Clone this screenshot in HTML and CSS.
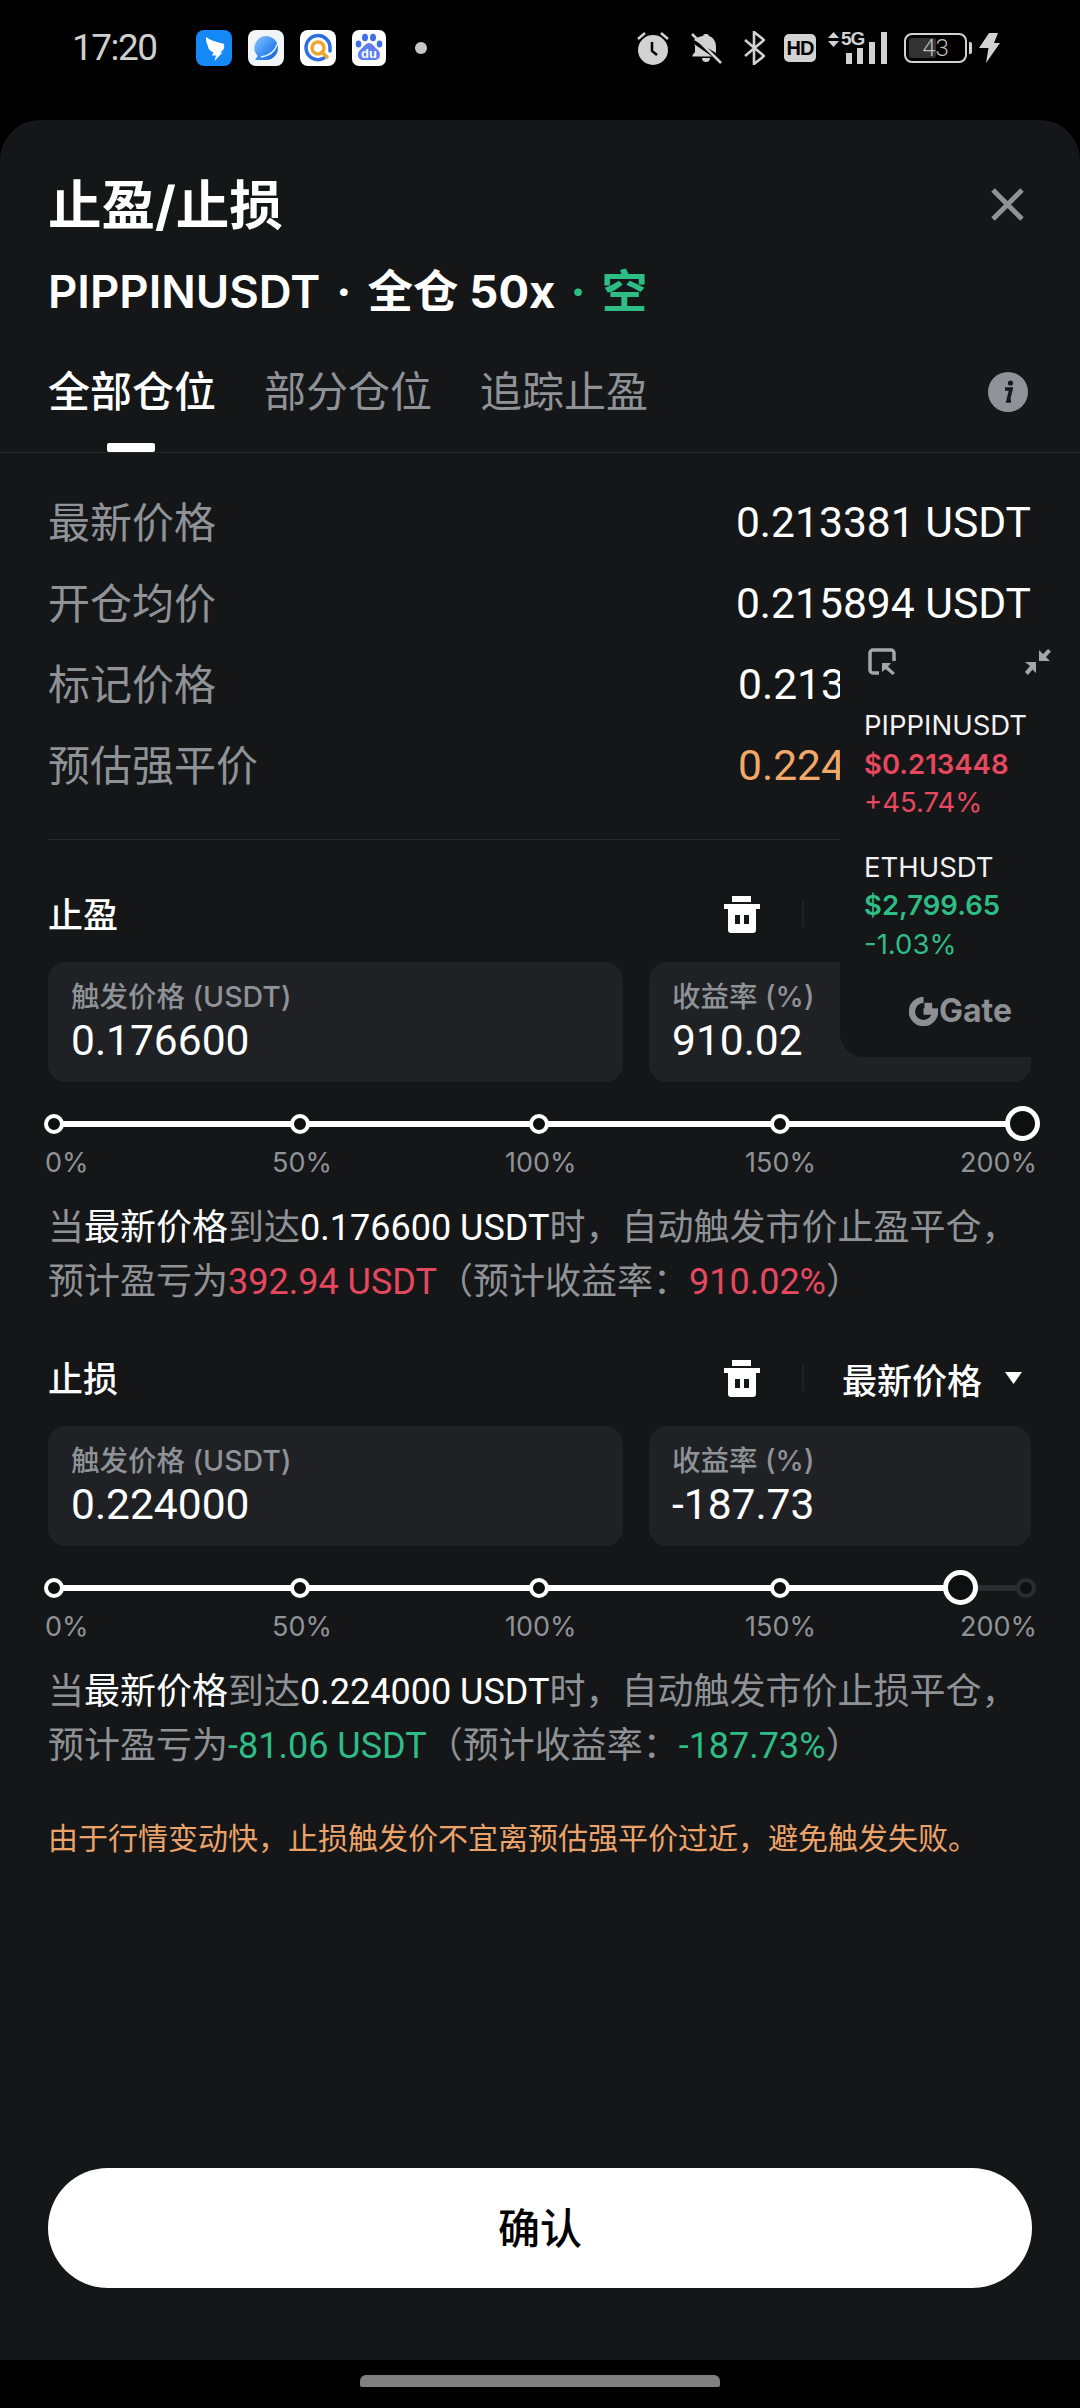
FILE: index.html
```html
<!DOCTYPE html>
<html lang="zh-CN">
<head>
<meta charset="utf-8">
<title>止盈/止损</title>
<link rel="stylesheet" href="styles.css">
</head>
<body>
<div class="screen">
  <header class="status">
    <span class="time">17:20</span>
    <div class="apps">
      <svg class="app" viewBox="0 0 36 36"><rect width="36" height="36" rx="8" fill="#1488f5"/><path d="M10 7C15 11 22 12 28 14C29 18 27 21 24 22.500L26.500 22.500L18.500 31L20 25.500L16 25.500L17.500 22.500C14 21 12 19 12 16C10 13 10 10 10 7Z" fill="#fff"/></svg>
      <svg class="app" viewBox="0 0 36 36"><defs><linearGradient id="orb" x1="0" y1="0" x2="1" y2="1"><stop offset="0" stop-color="#8cc8fb"/><stop offset=".55" stop-color="#3a8df2"/><stop offset="1" stop-color="#1557d6"/></linearGradient></defs><rect width="36" height="36" rx="8" fill="#f2f5f8"/><path d="M18 6a12 12 0 1 1 0 24H7l2.500-4A12 12 0 0 1 18 6Z" fill="url(#orb)"/><path d="M13 27C21 26 27 21 29.500 14" fill="none" stroke="#e8f2fd" stroke-width="1.500"/></svg>
      <svg class="app" viewBox="0 0 36 36"><rect width="36" height="36" rx="8" fill="#fff"/><path d="M24 28A12 12 0 1 1 30 18V21" fill="none" stroke="#2f6fe0" stroke-width="3.500" stroke-linecap="round"/><circle cx="18" cy="18" r="6" fill="none" stroke="#eda72f" stroke-width="3.500"/><path d="M22 22L27 27" stroke="#eda72f" stroke-width="3.500" stroke-linecap="round"/></svg>
      <svg class="app narrow" viewBox="0 0 34 36"><rect width="34" height="36" rx="7" fill="#fff"/><ellipse cx="6.500" cy="14" rx="2.800" ry="3.600" fill="#3f6fe8"/><ellipse cx="13" cy="7.500" rx="3" ry="3.800" fill="#3f6fe8"/><ellipse cx="21" cy="7.500" rx="3" ry="3.800" fill="#3f6fe8"/><ellipse cx="27.500" cy="14" rx="2.800" ry="3.600" fill="#3f6fe8"/><path d="M17 13C21 13 22 17 26 20C29 23 29 30 23 30H11C5 30 5 23 8 20C12 17 13 13 17 13Z" fill="#5d7ff0"/><text x="17" y="28" class="du">du</text></svg>
      <span class="dot"></span>
    </div>
    <div class="sys">
      <svg class="alarm" viewBox="0 0 32 34"><circle cx="16" cy="19" r="15" fill="#d2d2d2"/><path d="M15 11V20L20 24" fill="none" stroke="#000" stroke-width="2.500"/><path d="M1 8L8 2M31 8L24 2" stroke="#d2d2d2" stroke-width="2.500"/></svg>
      <svg class="bell" viewBox="0 0 31 32"><path d="M15 2a2.500 2.500 0 0 1 3 2C23 6 25 10 25 15V21L3 8C5 6 8 4.500 12 4A2.500 2.500 0 0 1 15 2ZM3 12L21 24.500H1.500V23L4 20V14ZM11 26H19A4 4 0 0 1 11 26Z" fill="#d2d2d2"/><path d="M1 2L30 31" stroke="#d2d2d2" stroke-width="2.500"/></svg>
      <svg class="bt" viewBox="0 0 21 34"><path d="M1 9L20 25L10 33V1L20 9L1 25" fill="none" stroke="#d2d2d2" stroke-width="2.600"/></svg>
      <span class="hd">HD</span>
      <div class="net">
        <svg class="net-arrows" viewBox="0 0 11 15"><path d="M5.500 0L11 6H0ZM0 9H11L5.500 15Z" fill="#d2d2d2"/></svg>
        <span class="fiveg">5G</span>
        <span class="bar b1"></span><span class="bar b2"></span><span class="bar b3"></span><span class="bar b4"></span>
      </div>
      <div class="battery"><span class="bat-body"><span class="bat-fill"></span><span class="bat-num">43</span></span><span class="bat-nub"></span></div>
      <svg class="bolt" viewBox="0 0 21 30"><path d="M10 0H19L15 10H21L7 30L9.500 15H0Z" fill="#d2d2d2"/></svg>
    </div>
  </header>

  <main class="sheet">
    <div class="title-row">
      <h1 class="title">止盈/止损</h1>
      <svg class="close" viewBox="0 0 33 33"><path d="M2 2L31 31M31 2L2 31" stroke="#8f9296" stroke-width="5"/></svg>
    </div>
    <div class="subtitle">PIPPINUSDT<span class="sep">·</span><span class="cross">全仓 50x</span><span class="sep green">·</span><span class="green side">空</span></div>
    <nav class="tabs">
      <span class="tab active">全部仓位</span>
      <span class="tab">部分仓位</span>
      <span class="tab">追踪止盈</span>
      <svg class="info" viewBox="0 0 40 40"><circle cx="20" cy="20" r="20" fill="#8f9296"/><circle cx="22.500" cy="11" r="2.600" fill="#17181b"/><path d="M17 17H23L20 29H23" fill="none" stroke="#17181b" stroke-width="3.600"/></svg>
    </nav>

    <section class="info-list">
      <div class="info-row"><span class="key">最新价格</span><span class="val">0.213381 USDT</span></div>
      <div class="info-row"><span class="key">开仓均价</span><span class="val">0.215894 USDT</span></div>
      <div class="info-row"><span class="key">标记价格</span><span class="val partial">0.213</span></div>
      <div class="info-row"><span class="key">预估强平价</span><span class="val partial orange">0.224</span></div>
    </section>

    <section class="block first">
      <div class="block-head covered">
        <span class="block-title">止盈</span>
        <svg class="trash" viewBox="0 0 36 37"><path d="M8 0H27V6H8ZM0 8H36V13H32V34a3 3 0 0 1-3 3H7a3 3 0 0 1-3-3V13H0ZM11 19V28H16V19ZM20 19V28H25V19Z" fill="#fff" fill-rule="evenodd"/></svg>
        <span class="vsep"></span>
      </div>
      <div class="inputs">
        <div class="field"><span class="field-label">触发价格 (USDT)</span><span class="field-value">0.176600</span></div>
        <div class="field"><span class="field-label">收益率 (%)</span><span class="field-value">910.02</span></div>
      </div>
      <div class="slider">
        <span class="track dim"></span>
        <span class="track fill full"></span>
        <span class="node n0"></span><span class="node n1"></span><span class="node n2"></span><span class="node n3"></span>
        <span class="thumb t-full"></span>
      </div>
      <div class="scale"><span>0%</span><span>50%</span><span>100%</span><span>150%</span><span>200%</span></div>
      <p class="desc">当<b>最新价格</b>到达<b>0.176600 USDT</b>时，自动触发市价止盈平仓，<br>预计盈亏为<i class="red">392.94 USDT</i>（预计收益率：<i class="red">910.02%</i>）</p>
    </section>

    <section class="block second">
      <div class="block-head">
        <span class="block-title">止损</span>
        <svg class="trash" viewBox="0 0 36 37"><path d="M8 0H27V6H8ZM0 8H36V13H32V34a3 3 0 0 1-3 3H7a3 3 0 0 1-3-3V13H0ZM11 19V28H16V19ZM20 19V28H25V19Z" fill="#fff" fill-rule="evenodd"/></svg>
        <span class="vsep"></span>
        <span class="drop">最新价格</span>
        <svg class="caret" viewBox="0 0 17 12"><path d="M0 0H17L8.500 12Z" fill="#fff"/></svg>
      </div>
      <div class="inputs">
        <div class="field"><span class="field-label">触发价格 (USDT)</span><span class="field-value">0.224000</span></div>
        <div class="field"><span class="field-label">收益率 (%)</span><span class="field-value">-187.73</span></div>
      </div>
      <div class="slider">
        <span class="track dim"></span>
        <span class="track fill part"></span>
        <span class="node n0"></span><span class="node n1"></span><span class="node n2"></span><span class="node n3"></span>
        <span class="node n4"></span>
        <span class="thumb t-part"></span>
      </div>
      <div class="scale"><span>0%</span><span>50%</span><span>100%</span><span>150%</span><span>200%</span></div>
      <p class="desc">当<b>最新价格</b>到达<b>0.224000 USDT</b>时，自动触发市价止损平仓，<br>预计盈亏为<i class="green">-81.06 USDT</i>（预计收益率：<i class="green">-187.73%</i>）</p>
    </section>

    <p class="warn">由于行情变动快，止损触发价不宜离预估强平价过近，避免触发失败。</p>

    <button class="confirm">确认</button>

    <aside class="ticker">
      <div class="ticker-tools">
        <svg class="tool" viewBox="0 0 28 27"><path d="M11 25H5a3 3 0 0 1-3-3V5a3 3 0 0 1 3-3h18a3 3 0 0 1 3 3v8" fill="none" stroke="#a6a6a6" stroke-width="3.500"/><path d="M14 15H23L20 18.500L27 25L24.500 27L17.500 21L14 24Z" fill="#a6a6a6"/></svg>
        <svg class="tool shrink" viewBox="0 0 26 27"><path d="M14 2V13H25L21 9L26 3.500L23 1L18 6ZM0 14H11V25L7.500 21.500L3 27L0 24L5 18Z" fill="#a6a6a6"/></svg>
      </div>
      <div class="coin first-coin">
        <div class="coin-name">PIPPINUSDT</div>
        <div class="coin-price red">$0.213448</div>
        <div class="coin-change red">+45.74%</div>
      </div>
      <div class="coin">
        <div class="coin-name">ETHUSDT</div>
        <div class="coin-price green">$2,799.65</div>
        <div class="coin-change green">-1.03%</div>
      </div>
      <div class="gate">
        <svg class="gate-mark" viewBox="0 0 30 30"><path d="M15 3A12 12 0 1 0 27 15H15" fill="none" stroke="#8d9093" stroke-width="6.500"/><rect x="16" y="6" width="8" height="8" fill="#8d9093"/></svg>
        <span class="gate-name">Gate</span>
      </div>
    </aside>
  </main>

  <footer class="nav"><span class="home"></span></footer>
</div>
</body>
</html>
```

FILE: styles.css
```css
* { box-sizing: border-box; }
html, body { margin: 0; padding: 0; background: #000; }
body { font-family: Inter, "Noto Sans CJK SC", sans-serif; color: #fff; }
.screen { width: 1080px; height: 2408px; display: flex; flex-direction: column; overflow: hidden; }

/* status bar */
.status { height: 120px; padding: 30px 80px 0 72px; display: flex; align-items: flex-start; flex: none; }
.time { width: 124px; height: 36px; font: 400 37px/36px Roboto, sans-serif; letter-spacing: -1.5px; color: #cfcfcf; }
.apps { display: flex; align-items: center; gap: 16px; height: 36px; }
.app { width: 36px; height: 36px; display: block; }
.app.narrow { width: 34px; }
.du { font: 700 13px "Liberation Sans", sans-serif; fill: #fff; text-anchor: middle; }
.dot { width: 12px; height: 12px; border-radius: 50%; background: #c8c8c8; margin-left: 13px; }
.sys { margin-left: auto; height: 36px; display: flex; align-items: center; }
.alarm { width: 32px; height: 34px; }
.bell { width: 31px; height: 32px; margin-left: 22px; }
.bt { width: 21px; height: 34px; margin-left: 22px; }
.hd { width: 32px; height: 28px; margin-left: 19px; border-radius: 5px; background: #d2d2d2; color: #000; font: 700 20px/28px "Liberation Sans", sans-serif; text-align: center; letter-spacing: -1px; }
.net { position: relative; width: 59px; height: 32px; margin-left: 12px; }
.net-arrows { position: absolute; left: 0; top: 0; width: 11px; height: 15px; }
.fiveg { position: absolute; left: 13px; top: -2px; font: 700 19px/18px "Liberation Sans", sans-serif; color: #d2d2d2; letter-spacing: -1px; }
.bar { position: absolute; bottom: 0; width: 6px; background: #d2d2d2; }
.b1 { left: 18px; height: 11px; }
.b2 { left: 29px; height: 16px; }
.b3 { left: 41px; height: 22px; }
.b4 { left: 53px; height: 32px; }
.battery { display: flex; align-items: center; margin-left: 17px; }
.bat-body { position: relative; width: 63px; height: 30px; border: 2px solid #d2d2d2; border-radius: 8px; overflow: hidden; display: block; }
.bat-fill { position: absolute; left: 3px; top: 3px; bottom: 3px; width: 27px; background: #333; border-radius: 3px; }
.bat-num { position: absolute; inset: 0; text-align: center; font: 300 24px/26px Roboto, sans-serif; color: #bdbdbd; }
.bat-nub { width: 3px; height: 12px; margin-left: 2px; background: #d2d2d2; border-radius: 0 2px 2px 0; }
.bolt { width: 21px; height: 30px; margin-left: 7px; }

/* sheet */
.sheet { position: relative; flex: 1; display: flex; flex-direction: column; background: #151618; border-radius: 40px 40px 0 0; overflow: hidden; padding-top: 56px; }
.title-row { display: flex; justify-content: space-between; align-items: center; padding: 0 56px 0 48px; height: 60px; }
.title { margin: 0; font-size: 53.500px; line-height: 60px; font-weight: 700; }
.close { width: 33px; height: 33px; display: block; margin-top: -3px; }
.subtitle { margin: 26px 0 0 48px; height: 60px; font-size: 45.500px; line-height: 60px; font-weight: 600; white-space: nowrap; }
.cross { font-weight: 700; }
.sep { margin: 0 16px; font-weight: 700; }
.sep.green { margin: 0 16px 0 15px; }
.side { font-weight: 700; }
.tabs { position: relative; display: flex; gap: 48px; height: 91px; margin-top: 40px; padding: 0 52px 0 48px; border-bottom: 1px solid #24262a; }
.tab { font-size: 42px; line-height: 60px; color: #8f9296; position: relative; height: 90px; }
.tab.active { color: #fff; font-weight: 500; }
.tab.active::after { content: ""; position: absolute; left: 59px; width: 48px; bottom: 0; height: 9px; background: #fff; border-radius: 2px; }
.info { width: 40px; height: 40px; margin: 10px 0 0 auto; display: block; }

.info-list { margin: 28px 49px 0 48px; padding-bottom: 34px; border-bottom: 1px solid #24262a; }
.info-row { height: 81px; display: flex; justify-content: space-between; align-items: center; font-size: 42px; color: #8f9296; }
.key { padding-bottom: 5px; }
.val { color: #fff; font-family: Roboto, sans-serif; font-size: 42.600px; font-weight: 400; }
.val.partial { width: 293px; }
.val.orange { color: #f2a869; }

.block { padding: 0 49px 0 48px; }
.block.first { margin-top: 44px; }
.block.second { margin-top: 39px; }
.block-head { height: 60px; display: flex; align-items: center; }
.block-title { font-size: 35px; font-weight: 500; margin-right: auto; padding-bottom: 4px; }
.trash { width: 36px; height: 37px; display: block; }
.vsep { width: 2px; height: 26px; margin: 0 38px 0 42px; background: #1f2124; }
.covered .vsep { margin-right: 227px; }
.drop { font-size: 35px; font-weight: 500; white-space: nowrap; }
.caret { width: 17px; height: 12px; margin: 0 9px 0 23px; display: block; }
.inputs { display: grid; grid-template-columns: 575px 382px; gap: 26px; margin-top: 18px; }
.field { height: 120px; border-radius: 18px; background: #1f2125; padding: 16px 23px 0; display: flex; flex-direction: column; }
.field-label { font-size: 28.500px; line-height: 38px; color: #8f9296; font-weight: 500; }
.field-value { font-family: Roboto, sans-serif; font-size: 42.500px; line-height: 50px; }

.slider { position: relative; height: 36px; margin: 24px 0 0 1px; }
.track { position: absolute; top: 15px; height: 6px; left: 5px; }
.track.dim { width: 972px; background: #2a2c30; }
.track.fill { background: #fff; }
.track.full { width: 969px; }
.track.part { width: 907px; }
.node { position: absolute; top: 8px; width: 20px; height: 20px; margin-left: -10px; border: 4px solid #fff; border-radius: 50%; background: #0e0f11; }
.n0 { left: 5px; }
.n1 { left: 251px; }
.n2 { left: 490px; }
.n3 { left: 731px; }
.n4 { left: 977px; border-color: #2a2c30; }
.thumb { position: absolute; top: 0; width: 35px; height: 35px; margin-left: -17px; border: 5px solid #fff; border-radius: 50%; background: #0e0f11; }
.t-full { left: 973px; }
.t-part { left: 911px; }
.scale { display: grid; grid-template-columns: 227px 233px 240px 215px 1fr; margin: 5px 0 0 -3px; height: 32px; font-size: 27px; line-height: 32px; color: #8f9296; }
.desc { margin: 22px 0 0; font-family: Roboto, "Noto Sans CJK SC", sans-serif; font-size: 36px; line-height: 54px; color: #8f9296; white-space: nowrap; }
.desc b { color: #fff; font-weight: 400; }
.desc i { font-style: normal; }

.red { color: #e6485f; }
.green { color: #2ebd85; }
.warn { margin: 45px 49px 0 48px; font-size: 30px; line-height: 40px; color: #eca36a; white-space: nowrap; }
.confirm { margin: auto 48px 72px; height: 120px; flex: none; border: 0; border-radius: 60px; background: #fff; color: #000; font: 500 42px/120px Inter, "Noto Sans CJK SC", sans-serif; }

/* floating ticker */
.ticker { position: absolute; left: 840px; top: 510px; width: 240px; height: 427px; padding: 18px 0 0 24px; background: #151618; border-radius: 24px 0 0 24px; }
.ticker-tools { display: flex; height: 27px; padding-left: 4px; }
.tool { width: 28px; height: 27px; display: block; }
.tool.shrink { width: 26px; margin-left: 129px; }
.coin { margin-top: 26px; }
.first-coin { margin-top: 31px; }
.coin-name, .coin-price, .coin-change { font-size: 27.500px; line-height: 38.500px; white-space: nowrap; }
.coin-name { color: #f2f2f2; }
.coin-price { font-weight: 600; }
.gate { display: flex; align-items: center; height: 40px; margin: 28px 0 0 45px; gap: 1px; }
.gate-mark { width: 29px; height: 29px; display: block; }
.gate-name { font-size: 32px; line-height: 40px; font-weight: 700; color: #8d9093; }

.nav { height: 48px; flex: none; display: flex; justify-content: center; padding-top: 15px; }
.home { width: 360px; height: 12px; border-radius: 6px 6px 2px 2px; background: #808080; }
```
